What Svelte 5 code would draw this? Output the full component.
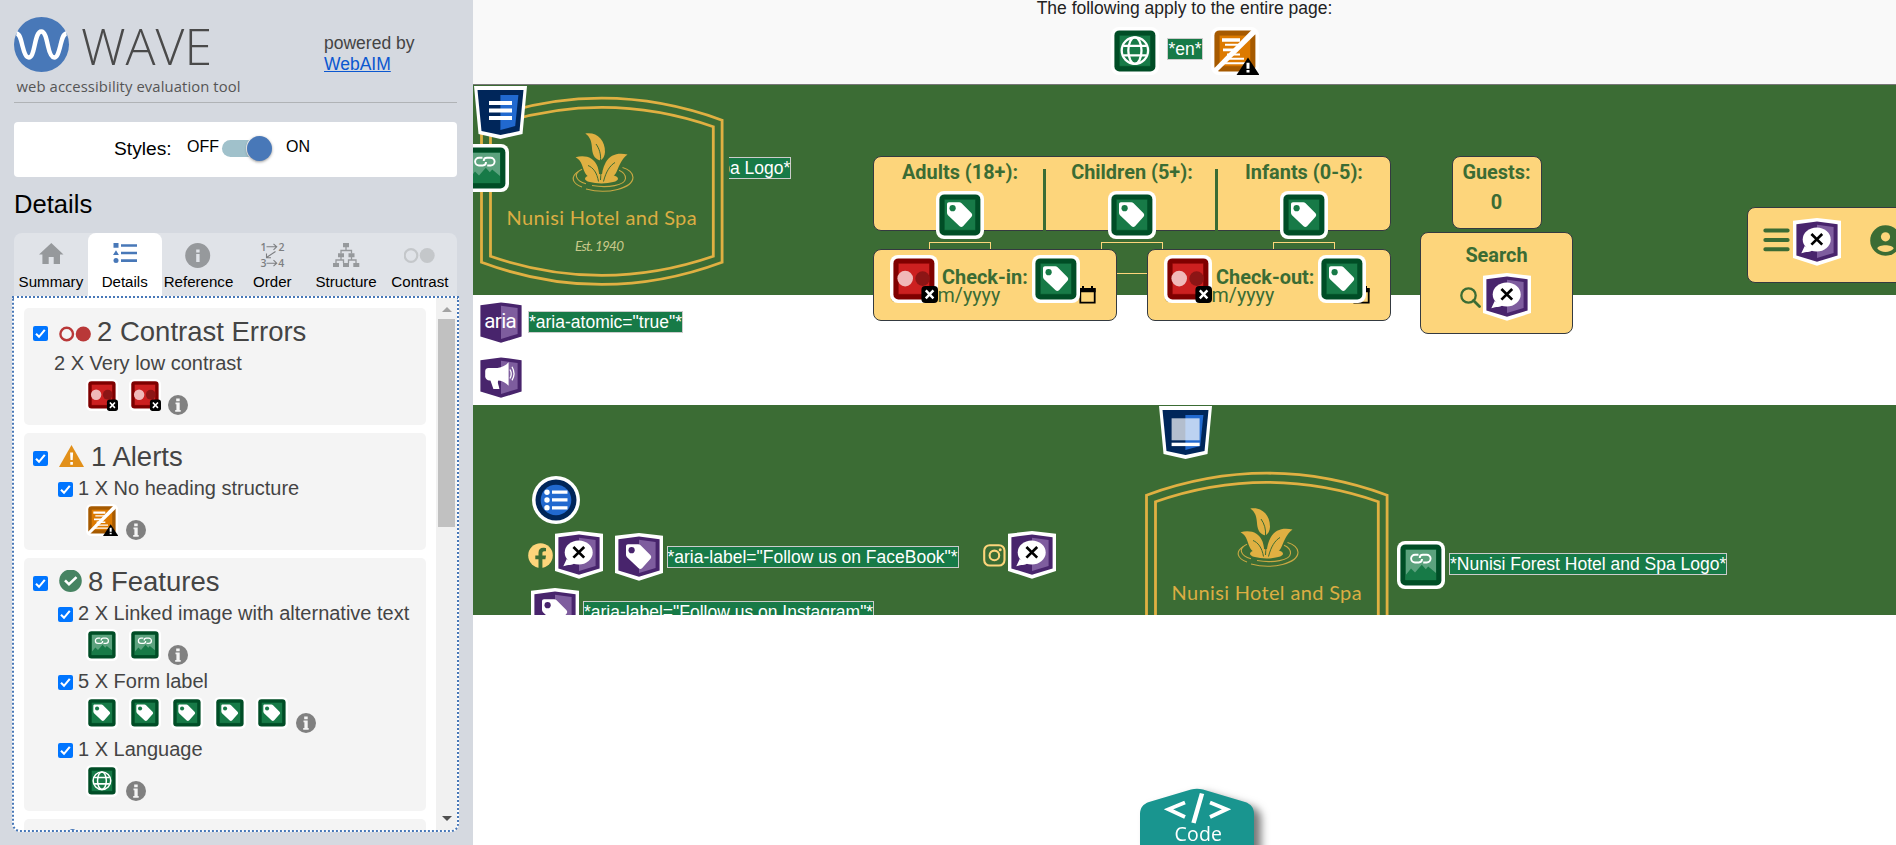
<script>
  const tabs = ['Summary', 'Details', 'Reference', 'Order', 'Structure', 'Contrast'];
  const groups = [
    { kind: 'contrast', title: '2 Contrast Errors', items: [{ label: '2 X Very low contrast', icon: 'low', count: 2, box: false }] },
    { kind: 'alert', title: '1 Alerts', items: [{ label: '1 X No heading structure', icon: 'heading', count: 1, box: true }] },
    {
      kind: 'feature',
      title: '8 Features',
      items: [
        { label: '2 X Linked image with alternative text', icon: 'link', count: 2, box: true },
        { label: '5 X Form label', icon: 'tag', count: 5, box: true },
        { label: '1 X Language', icon: 'globe', count: 1, box: true }
      ]
    }
  ];
  const guests = ['Adults (18+):', 'Children (5+):', 'Infants (0-5):'];
  const tones = {
    tag: ['#004d26', '#177a47'],
    link: ['#004d26', '#177a47'],
    globe: ['#004d26', '#177a47'],
    low: ['#7f0000', '#cc2020'],
    heading: ['#a65a00', '#dd7a00']
  };
</script>

{#snippet tagGlyph(hole)}
  <path d="M13 11.3h10.2c.9 0 1.7.3 2.4 1L35.3 22c1.2 1.2 1.2 2.8 0 4L27 35.3c-1 1-2.4 1-3.4 0L12 24.2c-.7-.7-1-1.5-1-2.4v-8.5c0-1.2.8-2 2-2z" fill="#fff" />
  <circle cx="16.6" cy="17.2" r="3.1" fill={hole} />
{/snippet}

{#snippet square(kind, size)}
  <svg class="ic" width={size} height={size} viewBox="0 0 48 48">
    <rect width="48" height="48" rx="8" fill="#fff" />
    <rect x="3.4" y="3.4" width="41" height="41" rx="5" fill={tones[kind][0]} />
    <rect x="8.3" y="8.3" width="31.2" height="31" fill={tones[kind][1]} stroke={tones[kind][0]} stroke-opacity=".5" />
    {#if kind === 'tag'}
      {@render tagGlyph('#177a47')}
    {:else if kind === 'globe'}
      <g fill="none" stroke="#fff" stroke-width="2.3">
        <circle cx="23.9" cy="23.6" r="13.2" />
        <ellipse cx="23.9" cy="23.6" rx="6.6" ry="13.2" />
        <path d="M12.2 18.9h23.4M12.2 28.3h23.4" />
      </g>
    {:else if kind === 'link'}
      <path d="M8.8 8.8h30.2v30.2H8.8z" fill="#5ca27e" />
      <path d="M8.8 34l5.2-6.4 4 3.8 6.8-7.7 4 4.6 2.4-2.8 7.8 6.5V39H8.8z" fill="#177a47" />
      <path d="M21.500 13.700H18a3.900 3.900 0 0 0 0 7.800h3.800c2.300 0 3.200-1.400 3.200-3.400M26.200 21.500h3.500a3.900 3.900 0 0 0 0-7.800h-3.800c-2.300 0-3.200 1.400-3.200 3.400" fill="none" stroke="#fff" stroke-width="1.900" />
    {:else if kind === 'low'}
      <circle cx="15.2" cy="23.6" r="7.8" fill="#f0b9b9" />
      <circle cx="32.6" cy="23.6" r="7.3" fill="#8c1515" />
      <rect x="31.4" y="30.9" width="16.6" height="17" rx="4" fill="#000" />
      <path d="M35.8 35.3l7.6 8M43.4 35.3l-7.6 8" stroke="#fff" stroke-width="2.4" />
    {:else if kind === 'heading'}
      <path d="M11 11.2h18v3.6H11zM14 16.8h14v2H14zM12 21.6h15v2.6H12zM16 26.4h13v2H16zM14 30.8h19v2H14zM11 35.2h23v2H11z" fill="#fff" />
      <path d="M2 42.6L41 2.6h4.4v3.6L6 45H2z" fill="#fff" />
      <path d="M37 30.5L48.5 48h-23z" fill="#000" />
      <path d="M35.5 35.8h3v6h-3zM35.5 43h3v2.4h-3z" fill="#fff" />
    {/if}
  </svg>
{/snippet}

{#snippet pent(kind)}
  <svg class="ic" width="48" height="48" viewBox="0 0 48 48">
    <path d="M0 2.8L24 0l24 2.8V40l-24 7.8L0 40z" fill="#fff" />
    <path d="M3.4 6.2L24 3.4l20.6 2.8v31.2L24 43.8 3.4 37.4z" fill="#48246c" />
    <path d="M24 6.7l16.6 2.4v25.8L24 39.9z" fill="#7e5d9e" />
    {#if kind === 'tag'}
      {@render tagGlyph('#48246c')}
    {:else if kind === 'aria'}
      <text x="7.2" y="28.8" font-family="Roboto, sans-serif" font-size="20.5" textLength="32.5" fill="#fff">aria</text>
    {:else if kind === 'live'}
      <path d="M10 15.4q.8-1.2 2.4-1.4h8c5-.4 8.3-2.6 11.2-5.7v23.4c-2.8-2.8-6-4.7-10-5.1-2 1 .8 6.2.8 8.4h-6l-3.2-9.2c-2.2-.6-3-2-3-4.600z" fill="#fff" />
      <path d="M8.200 17c0-2 1.500-3 3.500-3h4v12.500h-3c-2.500 0-4.500-2-4.500-4z" fill="#fff" />
      <path d="M33 15.500q2.500 4.500 0 9M35 12.800q4 7 0 13.500" fill="none" stroke="#fff" stroke-width="1.300" />
    {:else}
      <ellipse cx="23.700" cy="21.500" rx="14" ry="12" fill="#fff" />
      <path d="M8.300 35.300l3.400-7.400 7.600 4.600c-2.500 1.800-5.500 1-11 2.800z" fill="#fff" />
      <path d="M18.400 16l10.800 10.600M29.200 16L18.400 26.600" stroke="#000" stroke-width="2.700" />
    {/if}
  </svg>
{/snippet}

{#snippet shield(kind)}
  <svg class="ic" width="53" height="53" viewBox="0 0 53 53">
    <path d="M0 0h53l-4.500 48-22 5-22-5z" fill="#fff" />
    <path d="M3.500 4h46l-4 41-19 4-19-4z" fill="#00265a" />
    <path d="M26.400 9h18l-3.200 31-14.800 4z" fill="#2169cf" />
    {#if kind === 'header'}
      <path d="M15 15h23v4H15zM15 22.400h23v4H15zM15 30h23v4H15z" fill="#fff" />
    {:else}
      <path d="M12.600 12.300h28v22h-28z" fill="#fff" opacity=".7" />
      <path d="M12.600 36.700h28v3.400h-28z" fill="#fff" />
    {/if}
  </svg>
{/snippet}

{#snippet logo()}
  <svg class="logo" width="256" height="210" viewBox="0 0 256 210">
    <rect width="256" height="210" fill="#3b6c34" />
    <g fill="none" stroke="#e0b042" stroke-width="2.800">
      <path d="M8.500 35.200Q128.800-8.800 249.100 35.200V177.200Q128.800 221.700 8.500 177.200z" />
      <path d="M17.500 41.700Q128.800 3 240.300 41.700V171.300Q128.800 209.500 17.500 171.300z" />
    </g>
    <g fill="#e0b042">
      <path d="M112.300 48.500c11-2 20 6 19.700 18.500-.2 4-2 7-4.500 8.500-7-1.500-8.200-7.500-8.600-13.500-.3-5.500-2-10.500-6.600-13.500z" />
      <path d="M102.600 72.300c9-2.500 18.500-.3 22 9.500 1 3 1.700 7 1.800 11.200-1.700 1.500-4.500 1.200-6.500.7-6.500-1.700-8.200-5.700-10-11.200-1.500-4.500-3-8-7.300-10.200z" />
      <path d="M154.500 69.500c-9.500-2-17.500 0-21.700 7.800-3 5.500-4.300 11.200-3.800 17 5.500.3 11-1.300 14-6.300 2.500-4.800 4.800-13.500 11.500-18.500z" />
      <ellipse cx="128.500" cy="93.700" rx="16.500" ry="4.800" />
    </g>
    <path d="M123 59c3.500 5 5 10 4.500 17 .5 7 .5 13 0 19M115 80.500c5 2 9 7 10.500 16M142 77.500c-5 3-9 9-11.500 19" fill="none" stroke="#3b6c34" stroke-width="1" />
    <g fill="none" stroke="#c9a843" stroke-width="1.100">
      <path d="M109 84.300c-9 4-7 11.600 4 14.400M119 100.500c16 2.800 33-.2 33.500-7 .2-4-2.500-6.500-6.500-8.200" />
      <path d="M105 86.800c-8 5.200-5.500 11.800 4 15.200M113 104c22 6 46.500-1 47-11.600.1-4.500-4.500-8.300-10.500-9.900" />
    </g>
    <text x="33.600" y="140.200" font-family="Lato, sans-serif" font-weight="400" font-size="20" textLength="190" fill="#dcae43">Nunisi Hotel and Spa</text>
    <text x="102" y="165.600" font-family="Lato, sans-serif" font-style="italic" font-weight="400" font-size="13.500" textLength="49" fill="#c9c98a">Est. 1940</text>
  </svg>
{/snippet}

{#snippet check()}
  <svg class="check" width="15" height="15" viewBox="0 0 15 15"><rect width="15" height="15" rx="2" fill="#0075ff" /><path d="M3 7.800l3 3 5.800-7" fill="none" stroke="#fff" stroke-width="2.100" /></svg>
{/snippet}

<div class="page">
  <aside>
    <header class="brand">
      <svg width="240" height="84" viewBox="0 0 240 84">
        <circle cx="27.500" cy="27.500" r="27.500" fill="#4878b8" />
        <path d="M2.500 16.500C6 17 7 23 8.500 29c1.800 7 3.500 11.500 6.300 11.500S19 36 20.500 29s3-14.500 6.800-14.500S32.500 22 34 29s3.500 11.500 6.300 11.500 4.200-4.500 6-11.500C48 22 49 17 52.500 16.500" fill="none" stroke="#fff" stroke-width="4.400" />
        <text x="67" y="47.500" font-family="Open Sans, sans-serif" font-weight="300" font-size="50" textLength="131" lengthAdjust="spacingAndGlyphs" fill="#4a4a4a">WAVE</text>
        <text x="2.500" y="75" font-family="Open Sans, sans-serif" font-size="14.800" textLength="224" fill="#555">web accessibility evaluation tool</text>
      </svg>
      <p>powered by<br /><a href="#webaim">WebAIM</a></p>
    </header>
    <div class="styles">
      <span class="lbl">Styles:</span><span>OFF</span><i class="switch"></i><span>ON</span>
    </div>
    <h1>Details</h1>
    <nav>
      {#each tabs as tab, i}
        <div class="tab" class:active={i === 1}>
          <svg width="32" height="28" viewBox="0 0 32 28">
            {#if i === 0}
              <path d="M16.300 2L4 13.500h3.400V23h6.300v-7h5v7H25v-9.500h3.500z" fill="#96999c" />
            {:else if i === 1}
              <path d="M4.500 2h5v4.800h-5zM7 9.200l2.900 4.800H4zM12 3.200h16v2.600H12zM12 10.700h16v2.600H12zM12 18.300h16v2.600H12z" fill="#4878b8" /><circle cx="7" cy="19.600" r="2.500" fill="#4878b8" />
            {:else if i === 2}
              <circle cx="15.700" cy="14.500" r="12.500" fill="#96999c" /><path d="M14.200 8.500h3.400v3h-3.400zM14.200 13h3.400v8h-3.400z" fill="#e0e3e8" />
            {:else if i === 3}
              <g fill="#7d7f81" font-family="Open Sans, sans-serif" font-size="10.500" font-weight="600"><text x="4.500" y="9.600">1</text><text x="22.500" y="9.600">2</text><text x="4.500" y="26">3</text><text x="22.300" y="26">4</text></g>
              <path d="M10.500 5.800h10M17.500 2.800l3.200 3-3.200 3M10.500 22.200h10M17.500 19.200l3.200 3-3.200 3M19.500 10.500l-9 6M10.500 12.500v4.300h4.500" fill="none" stroke="#7d7f81" stroke-width="1.100" />
            {:else if i === 4}
              <path d="M13 2h6v4.300h-6zM8 12.200h6v4h-6zM18.500 12.200h6v4h-6zM3 22h6v4H3zM13 22h6v4h-6zM23.300 22h6v4h-6z" fill="#96999c" />
              <path d="M16 6v3.500M11 12.500v-3h10.500v3M11 16v3M21.500 16v3M6 22v-3h7.500v3M18.500 22v-3H26v3" fill="none" stroke="#96999c" stroke-width="1.300" />
            {:else}
              <circle cx="7" cy="14.500" r="6.300" fill="none" stroke="#c4c7ca" stroke-width="2.200" /><circle cx="23.200" cy="14.500" r="7.500" fill="#c4c7ca" />
            {/if}
          </svg>
          <span>{tab}</span>
        </div>
      {/each}
    </nav>
    <div class="panel">
      <div class="list">
        {#each groups as g}
          <section class="group">
            <div class="title">
              {@render check()}
              {#if g.kind === 'contrast'}
                <svg width="32" height="24" viewBox="0 0 32 24"><circle cx="7.700" cy="14" r="6.300" fill="none" stroke="#b93838" stroke-width="2.400" /><circle cx="24.300" cy="14" r="7.600" fill="#b93838" /></svg>
              {:else if g.kind === 'alert'}
                <svg width="26" height="24" viewBox="0 0 26 24"><path d="M12.500 0L25 22H0z" fill="#e2901a" /><path d="M11.100 7.500h3l-.4 7.500h-2.200zM11.300 17h2.600v2.700h-2.600z" fill="#fff" /></svg>
              {:else}
                <svg width="23" height="24" viewBox="0 0 23 24"><circle cx="11.500" cy="10.800" r="11.300" fill="#468362" /><path d="M6 10.300l4 4 7.500-7.200" fill="none" stroke="#fff" stroke-width="2.600" /></svg>
              {/if}
              <h2>{g.title}</h2>
            </div>
            {#each g.items as item}
              <div class="item">
                <div class="line" class:boxed={item.box}>
                  {#if item.box}{@render check()}{/if}<span>{item.label}</span>
                </div>
                <div class="icons">
                  {#each Array(item.count) as _}{@render square(item.icon, 32)}{/each}
                  <svg class="info" width="20" height="20" viewBox="0 0 20 20"><circle cx="10" cy="10" r="10" fill="#808080" /><path d="M8.200 3.500h3.500v2.700H8.200zM7.500 7.500h4.200V15h1v1.800H7.200V15h1.200V9.200h-.9z" fill="#f4f4f4" /></svg>
                </div>
              </div>
            {/each}
          </section>
        {/each}
        <section class="group next"><i></i></section>
      </div>
      <div class="scroll"><i class="up"></i><b></b><i class="down"></i></div>
    </div>
  </aside>

  <main>
    <div class="notice">
      <p>The following apply to the entire page:</p>
      <div class="row">{@render square('globe', 48)}<span class="note">*en*</span>{@render square('heading', 48)}</div>
    </div>

    <div class="hero">
      <span class="note logonote">*Nunisi Forest Hotel and Spa Logo*</span>
      {@render logo()}
      <div class="pin" style="left:1px;top:1px">{@render shield('header')}</div>
      <div class="pin" style="left:-12px;top:59px">{@render square('link', 48)}</div>

      <div class="booking">
        <div class="counts">
          {#each guests as g}
            <div class="count"><b>{g}</b>{@render square('tag', 48)}<i></i></div>
          {/each}
        </div>
        <div class="dates">
          {#each ['Check-in:', 'Check-out:'] as d, i}
            <div class="card date" class:out={i === 1}>
              <div class="field">dd/mm/yyyy</div>
              <svg class="cal" width="17" height="18" viewBox="0 0 17 18"><path d="M1.300 3h14.400v13.700H1.300z" fill="none" stroke="#000" stroke-width="1.800" /><path d="M.4 2.200h16.200v4H.4zM3 0h2v3H3zM12 0h2v3h-2z" /></svg>
              <div class="over">{@render square('low', 48)}<b>{d}</b>{@render square('tag', 48)}</div>
            </div>
          {/each}
        </div>
      </div>

      <div class="side">
        <div class="card total"><b>Guests:</b><b>0</b></div>
        <div class="card search">
          <b>Search</b>
          <div class="row">
            <svg width="21" height="21" viewBox="0 0 21 21"><g fill="none" stroke="#3b6c34" stroke-width="2.300"><circle cx="8.500" cy="8.500" r="7.200" /><path d="M13.500 13.500l6 6" stroke-width="2.800" stroke-linecap="round" /></g></svg>
            {@render pent('x')}
          </div>
        </div>
      </div>

      <div class="card menu">
        <svg width="27" height="24" viewBox="0 0 27 24"><path d="M2.300 2.500h22.400M2.300 12h22.400M2.300 21.300h22.400" stroke="#3b6c34" stroke-width="3.900" stroke-linecap="round" /></svg>
        {@render pent('x')}
        <svg class="user" width="31" height="31" viewBox="0 0 31 31"><circle cx="15.500" cy="15.500" r="15.300" fill="#3b6c34" /><circle cx="15.500" cy="11.800" r="4.600" fill="#fdd57b" /><path d="M7.200 23.300c1.300-4.200 15.300-4.200 16.600 0-3.800 5-12.800 5-16.600 0z" fill="#fdd57b" /></svg>
      </div>
    </div>

    <div class="live">
      <div class="row">{@render pent('aria')}<span class="note">*aria-atomic="true"*</span></div>
      {@render pent('live')}
    </div>

    <footer>
      <div class="pin" style="left:686px;top:1px">{@render shield('footer')}</div>
      <div class="social">
        <svg class="ic" width="48" height="48" viewBox="0 0 48 48"><circle cx="24" cy="24" r="24" fill="#fff" /><circle cx="24" cy="24" r="20.500" fill="#00265a" /><circle cx="24" cy="24" r="15.300" fill="#2169cf" /><path d="M20 14.500h15.500v3.200H20zM20 22.300h15.500v3.200H20zM20 30.200h15.500v3.200H20z" fill="#fff" /><g fill="#fff"><circle cx="15" cy="16.200" r="2.700" /><circle cx="15" cy="24" r="2.700" /><circle cx="15" cy="31.800" r="2.700" /></g></svg>
        <div class="line1">
          <svg width="25" height="25" viewBox="0 0 25 25"><circle cx="12.500" cy="12.500" r="12.300" fill="#fdd57b" /><path d="M10.500 25v-8.800H7.300v-3.600h3.200V9.800c0-3.200 1.900-5 4.800-5 1.400 0 2.700.3 2.700.3v3.100h-1.600c-1.500 0-2 .9-2 1.900v2.500H18l-.6 3.600h-3V25z" fill="#3b6c34" /></svg>
          {@render pent('x')}
          <div class="tagp">{@render pent('tag')}<span class="note">*aria-label="Follow us on FaceBook"*</span></div>
          <svg class="insta" width="23" height="23" viewBox="0 0 23 23"><g fill="none" stroke="#fdd57b" stroke-width="2.100"><rect x="1.200" y="1.200" width="20.300" height="20.300" rx="5.500" /><circle cx="11.400" cy="11.400" r="4.800" /></g><circle cx="17.200" cy="5.700" r="1.500" fill="#fdd57b" /></svg>
          {@render pent('x')}
        </div>
        <div class="line2">{@render pent('tag')}<span class="note">*aria-label="Follow us on Instagram"*</span></div>
      </div>
      <div class="flogo">{@render logo()}</div>
      <div class="flink">{@render square('link', 48)}<span class="note">*Nunisi Forest Hotel and Spa Logo*</span></div>
    </footer>

    <button class="code" aria-label="Code">
      <svg width="140" height="70" viewBox="0 0 140 70">
        <path d="M10 29c0-6 3-10 9-12L61 4.600q6-1.800 12 0L115 17c6 2 9 6 9 12v50H10z" fill="#19958f" />
        <path d="M55 17.500L38.500 24.300 55 32M80 17.500L96.500 24.300 80 32" fill="none" stroke="#fff" stroke-width="3.800" />
        <path d="M72 8.500L63.500 38" stroke="#fff" stroke-width="4.500" />
        <text x="44.500" y="56" font-family="Open Sans, sans-serif" font-size="19.500" textLength="47.500" fill="#fff">Code</text>
      </svg>
    </button>
  </main>
</div>

<style>
  :global(body) { background: #fff; overflow: hidden; }
  * { box-sizing: border-box; }
  p, h1, h2 { margin: 0; font-weight: 400; }
  svg { display: block; flex: none; }
  .page { display: flex; width: 1896px; height: 845px; overflow: hidden; font-family: "Liberation Sans", Arial, sans-serif; }
  aside { width: 473px; flex: none; background: #d5d9e0; padding: 17px 16px 13px 14px; display: flex; flex-direction: column; color: #000; }
  .brand { height: 86px; border-bottom: 1px solid #b0b3b6; display: flex; }
  .brand p { margin: 16px 0 0 70px; font-size: 17.500px; line-height: 21px; color: #444; }
  .brand a { color: #0b57d0; }
  .styles { height: 55px; margin-top: 19px; background: #fff; border-radius: 4px; display: flex; align-items: center; padding-left: 100px; font-size: 16px; }
  .styles span { position: relative; top: -3px; }
  .styles .lbl { font-size: 19.200px; width: 73px; top: -1px; }
  .switch { width: 43px; height: 17px; border-radius: 9px; background: #a0c1cb; margin: 0 21px 0 3px; position: relative; top: -1px; }
  .switch::after { content: ""; position: absolute; left: 25px; top: -4px; width: 25px; height: 25px; border-radius: 50%; background: #4878b8; box-shadow: 0 1px 3px #0006, 0 0 0 1px #fff; }
  h1 { font-size: 25.600px; line-height: 30px; margin: 12px 0 14px; }
  nav { display: flex; height: 63px; flex: none; background: #e0e3e8; border-radius: 8px 8px 0 0; }
  .tab { width: 73.800px; display: flex; flex-direction: column; align-items: center; padding-top: 8px; font-size: 15.100px; border-radius: 8px 8px 0 0; flex: none; }
  .tab span { line-height: 18px; margin-top: 4px; }
  .tab.active { background: #fff; }
  .panel { height: 536px; flex: none; margin: 0 -2px; border: 2px dotted #4878b8; border-radius: 0 0 8px 8px; background: #fff; display: flex; overflow: hidden; }
  .list { width: 422px; padding: 10px 10px 0; height: 532px; overflow: hidden; display: flex; flex-direction: column; gap: 8px; color: #444; }
  .group { background: #f4f4f4; border-radius: 5px; flex: none; padding: 0 0 2px 9px; }
  .next { height: 60px; padding: 10px 0 0 44px; }
  .next i { display: block; width: 9px; height: 9px; background: #4878b8; border-radius: 50%; }
  .title { height: 47px; display: flex; align-items: center; }
  .title .check { margin-right: 11px; }
  .check { position: relative; top: 2px; }
  .boxed .check { top: 1px; }
  h2 { font-size: 27.500px; line-height: 32px; margin-left: 6px; white-space: nowrap; }
  .item { height: 68px; }
  .line { height: 16px; display: flex; align-items: center; font-size: 20px; line-height: 16px; padding-left: 21px; white-space: nowrap; }
  .boxed { padding-left: 25px; }
  .boxed span { margin-left: 5px; }
  .icons { display: flex; gap: 10.600px; padding: 8px 0 0 53px; }
  .info { margin: 16px 0 0 -3px; }
  .scroll { width: 21px; background: #f1f1f1; display: flex; flex-direction: column; align-items: center; padding: 9px 0; }
  .scroll b { width: 17px; height: 208px; background: #c1c1c1; margin-top: 7px; }
  .scroll i { border: 5px solid transparent; border-top: 0; border-bottom-color: #a3a3a3; }
  .scroll .down { border-bottom: 0; border-top: 5px solid #505050; margin-top: auto; }

  main { flex: 1; min-width: 0; position: relative; overflow: hidden; background: #fff; }
  .notice { height: 85px; background: #f9f9f9; border-bottom: 1px solid #777; color: #222; font-size: 17.500px; overflow: hidden; }
  .notice p { text-align: center; height: 17px; line-height: 16px; }
  .row { display: flex; }
  .notice .row { justify-content: center; align-items: center; gap: 8px; padding: 8px 0 0 1px; height: 60px; }
  .note { display: block; background: #177a47; color: #fff; border: 1px solid #ccc; height: 22px; line-height: 20px; font-size: 17.500px; white-space: nowrap; flex: none; }
  .notice .note { position: relative; top: -2px; }

  .hero { height: 210px; background: #3b6c34; position: relative; display: flex; align-items: flex-start; z-index: 1; }
  .pin { position: absolute; }
  .logonote { position: absolute; left: 40px; top: 72px; }
  .logo { position: relative; }
  b { font-family: Roboto, sans-serif; font-size: 19.900px; line-height: 22px; color: #3b6c34; font-weight: 700; white-space: nowrap; }
  .card, .counts { background: #fdd57b; border: 1px solid #343a40; border-radius: 8px; }
  .booking { width: 518px; flex: none; margin: 71px 0 0 144px; }
  .counts { display: flex; height: 75px; }
  .count { flex: 1; display: flex; flex-direction: column; align-items: center; position: relative; padding-top: 5px; }
  .count .ic { margin-top: 7px; position: relative; z-index: 1; }
  .count i { position: absolute; top: 85px; left: 55px; width: 62px; height: 32px; border: 1px solid #fdd57b; }
  .count + .count::before { content: ""; position: absolute; left: -3px; top: 12px; width: 3px; height: 62px; background: #3b6c34; }
  .dates { display: flex; justify-content: space-between; margin-top: 18px; position: relative; }
  .date { width: 244px; height: 72px; position: relative; }
  .field { font: 19.700px/22px Roboto, sans-serif; color: #3b6c34; padding: 35px 0 0 16px; }
  .cal { position: absolute; left: 205px; top: 36px; }
  .over { position: absolute; left: 16px; top: 5px; display: flex; align-items: center; gap: 4px; }
  .over b { position: relative; top: -1px; }
  .side { width: 153px; flex: none; margin: 71px 0 0 29px; display: flex; flex-direction: column; align-items: center; gap: 3px; }
  .total { width: 90px; height: 73px; display: flex; flex-direction: column; align-items: center; gap: 8px; padding-top: 5px; }
  .search { width: 153px; height: 102px; display: flex; flex-direction: column; align-items: center; padding-top: 12px; }
  .search .row { align-items: center; gap: 2px; margin: 6px 3px 0 0; }
  .menu { margin: 122px 0 0 174px; height: 76px; width: 180px; flex: none; padding: 0 0 0 15px; display: flex; align-items: center; }
  .menu .ic { margin: -6px 29px 0 3px; }
  .menu svg:first-child, .user { margin-top: -10px; }

  .live { height: 110px; padding: 4px 0 0 4px; display: flex; flex-direction: column; gap: 7px; }
  .live .note { margin: 12px 0 0 3px; }
  footer { height: 210px; background: #3b6c34; position: relative; overflow: hidden; display: flex; }
  .social { width: 669px; padding: 71px 0 0 55px; flex: none; }
  .social > .ic { margin-left: 4px; }
  .line1 { display: flex; align-items: center; margin-top: 7px; height: 48px; }
  .line1 > .ic { margin-left: 2px; }
  .tagp { display: flex; align-items: center; gap: 4px; margin: 4px 0 0 11.500px; }
  .insta { margin-left: 24.500px; }
  .line2 { display: flex; align-items: center; gap: 4px; margin: 9px 0 0 3px; }
  .flogo { padding-top: 55px; margin-left: -4px; }
  .flink { display: flex; align-items: flex-start; margin: 136px 0 0 3px; gap: 4px; }
  .flink .note { margin-top: 12px; }
  .code { position: absolute; left: 657px; bottom: -10px; height: 70px; padding: 0; border: 0; background: none; filter: drop-shadow(7px 5px 4px #0008); }
</style>
